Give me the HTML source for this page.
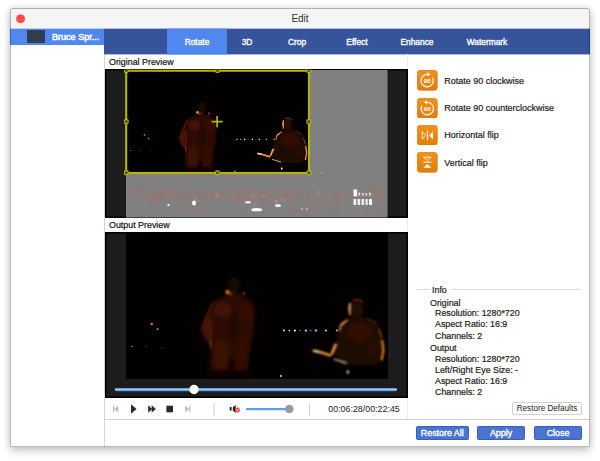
<!DOCTYPE html>
<html><head><meta charset="utf-8">
<style>
html,body{margin:0;padding:0;background:#fff;}
body{width:600px;height:461px;position:relative;overflow:hidden;font-family:"Liberation Sans",sans-serif;font-size:9px;color:#222;}
#win{position:absolute;left:10px;top:8px;width:580px;height:439px;background:#fff;border-radius:2.5px 2.5px 0 0;box-shadow:0 5px 9px rgba(0,0,0,.16),0 0 6px rgba(0,0,0,.16);overflow:hidden;}
#frameb{position:absolute;left:0;top:0;right:0;bottom:0;border:1px solid rgba(0,0,0,.27);border-radius:2.5px 2.5px 0 0;pointer-events:none;}
.abs{position:absolute;}
#title{left:0;top:0;width:580px;height:21px;background:#f5f5f5;text-align:center;line-height:21px;font-size:10px;color:#333;}
#dot{left:6.3px;top:6.5px;width:8.4px;height:8.4px;border-radius:50%;background:#fc4d47;box-shadow:inset 0 0 0 .5px #d93a34;}
#left{left:0;top:21px;width:94px;height:418px;background:#fff;border-right:1px solid #d4d4d4;}
#row{left:0;top:21px;width:94px;height:16px;background:#5287ef;color:#fff;font-weight:normal;-webkit-text-stroke:.5px #fff;font-size:9.05px;line-height:16px;white-space:nowrap;}
#thumb{left:17px;top:22px;width:18px;height:13px;background:#333d4d;}
#tabs{left:94px;top:21px;width:486px;height:25px;background:#35549c;}
.tab{position:absolute;top:0;height:25px;line-height:26.5px;color:#fff;font-weight:normal;-webkit-text-stroke:.35px #fff;font-size:8.4px;text-align:center;}
.lbl{-webkit-text-stroke:.2px #111;font-size:8.9px;color:#111;line-height:12px;}
.btn{position:absolute;height:12px;line-height:12px;background:#4a74cf;border:1px solid #3a5fb8;color:#fff;font-weight:normal;-webkit-text-stroke:.35px #fff;font-size:8.9px;text-align:center;border-radius:1.5px;}
.ico{position:absolute;left:407px;width:21px;height:21px;background:#e8860f;border-radius:2.5px;}
.itx{-webkit-text-stroke:.2px #222;position:absolute;left:434.3px;font-size:8.97px;color:#222;line-height:12px;}
.info{-webkit-text-stroke:.2px #222;position:absolute;font-size:8.85px;color:#222;line-height:11px;white-space:nowrap;}
</style></head><body>

<svg width="0" height="0" style="position:absolute">
<defs>
<filter id="b1" x="-20%" y="-20%" width="140%" height="140%"><feGaussianBlur stdDeviation="2.2"/></filter>
<filter id="b2" x="-20%" y="-20%" width="140%" height="140%"><feGaussianBlur stdDeviation="0.8"/></filter>
<filter id="b3" x="-20%" y="-20%" width="140%" height="140%"><feGaussianBlur stdDeviation="0.5"/></filter>
<clipPath id="hc"><rect x="-2" y="-0.3" width="190" height="110"/></clipPath>
<symbol id="frame" viewBox="0 0 261.5 147.5" preserveAspectRatio="none">
<rect width="261.5" height="147.5" fill="#020000"/>
<g transform="translate(0.5,0.5) scale(0.6993)">
 <!-- figure 1 -->
 <g filter="url(#b1)" opacity=".88">
  <path d="M103 62 L87 70 L79 86 L75 100 L79 108 L84 113 L84 130 L86 143 L121 143 L124 120 L128 100 L129 82 L128 71 L114 62 Z" fill="#330e04"/>
  <ellipse cx="108" cy="53" rx="6.5" ry="8" fill="#1a0703"/>
  <ellipse cx="97" cy="78" rx="9" ry="8" fill="#481407"/>
  <ellipse cx="120" cy="80" rx="7" ry="9" fill="#401105"/>
  <ellipse cx="82" cy="97" rx="5" ry="13" fill="#501708"/>
  <ellipse cx="108" cy="94" rx="4" ry="18" fill="#230902"/>
  <ellipse cx="95" cy="122" rx="8" ry="16" fill="#421206"/>
  <ellipse cx="116" cy="118" rx="6" ry="18" fill="#3a1005"/>
  <ellipse cx="105" cy="134" rx="3" ry="10" fill="#180501"/>
  <rect x="80" y="138" width="48" height="9" fill="#0a0301"/>
 </g>
 <g filter="url(#b2)">
  <path d="M87 70 L80 86 L76 99" stroke="#64200a" stroke-width="1.3" fill="none"/>
  <ellipse cx="101.5" cy="60" rx="1.9" ry="2.1" fill="#ff8e22"/>
  <ellipse cx="104" cy="61.5" rx="3" ry="1.1" fill="#a8480e"/>
  <ellipse cx="118" cy="61.5" rx="1.3" ry="1.7" fill="#8a3c0e"/>
  <path d="M84.5 108 L85 116" stroke="#a04418" stroke-width="1.1" fill="none"/>
 </g>
 <!-- figure 2 -->
 <g filter="url(#b1)">
  <path d="M223 86 L214 92 L210 108 L207 120 L212 127 L216 133 L250 133 L256 128 L257 108 L253 92 L238 85 Z" fill="#1f0802"/>
  <ellipse cx="231" cy="77" rx="6.5" ry="8" fill="#260b03"/>
  <ellipse cx="234" cy="100" rx="12" ry="9" fill="#361105"/>
  <ellipse cx="247" cy="116" rx="5" ry="10" fill="#2c0d04"/>
 </g>
 <g filter="url(#b2)">
  <path d="M224.5 71 Q222.5 76 224.5 83" stroke="#ff9c4c" stroke-width="1.7" fill="none"/>
  <path d="M224.3 73 L224 79" stroke="#ffe0b0" stroke-width=".9" fill="none"/>
  <path d="M227 68.5 Q233 66 237 70.5" stroke="#8a3c0e" stroke-width="1.3" fill="none"/>
  <path d="M222 87.5 L215 93 L213.5 99" stroke="#f08a30" stroke-width="1.5" fill="none"/>
  <path d="M219 89.5 L215.5 93" stroke="#ffd8a0" stroke-width="1" fill="none"/>
  <path d="M241 86.5 L251 91.5" stroke="#6a2c0a" stroke-width="1.1" fill="none"/>
  <path d="M253 97 L256 106" stroke="#b85a18" stroke-width="1.1" fill="none"/>
  <path d="M256.3 108 L257.6 118 L255.8 128" stroke="#ff8a20" stroke-width="2" fill="none"/>
  <path d="M210.5 112 L208 117 L205.5 123" stroke="#ff8a28" stroke-width="2.4" fill="none"/>
  <path d="M209 112 L206.5 120" stroke="#ffc070" stroke-width="1" fill="none"/>
  <path d="M187 118.5 L196 120.5 L205 123.5" stroke="#ff9a38" stroke-width="2.4" fill="none"/>
  <path d="M187.5 118.5 L194 120" stroke="#ffe8b0" stroke-width="1.5" fill="none"/>
  <path d="M208 127 L221 131" stroke="#d8c8b8" stroke-width="1.2" fill="none"/>
  <ellipse cx="222" cy="140" rx="1.1" ry="1.8" fill="#fff0e0"/>
 </g>
 <!-- lights -->
 <g filter="url(#b3)">
  <circle cx="158" cy="98.5" r="1" fill="#e0e0f0"/><circle cx="163.5" cy="98.5" r=".9" fill="#c8c8d8"/>
  <circle cx="169" cy="98.5" r="1.1" fill="#e8e8ff"/><circle cx="180" cy="98.5" r="1.1" fill="#d0d8ff"/>
  <circle cx="190" cy="98.5" r="1.2" fill="#8fb0ff"/><circle cx="200" cy="98.5" r="1" fill="#c8d0f0"/>
  <circle cx="211" cy="98.5" r="1" fill="#b0b8e0"/><circle cx="174" cy="98.5" r=".7" fill="#9090a0"/><circle cx="185" cy="98.5" r=".7" fill="#9090a0"/>
  <circle cx="25.7" cy="92" r="1.3" fill="#e86a30"/><circle cx="31.6" cy="97" r=".9" fill="#c0c0c0"/>
  <circle cx="6" cy="114.4" r=".8" fill="#a0a0a0"/><circle cx="155" cy="144" r="1" fill="#d8d8d8"/>
  <circle cx="20" cy="114" r=".6" fill="#707070"/><circle cx="36" cy="116" r=".6" fill="#606060"/>
 </g>
</g>
</symbol>
</defs></svg>
<div id="win">
  <div id="title" class="abs">Edit</div>
  <svg class="abs" style="left:5px;top:5px;" width="12" height="12" viewBox="0 0 12 12"><circle cx="5.6" cy="5.8" r="4.1" fill="#fc4e48" stroke="#de3d37" stroke-width=".5"/></svg>
  <div id="left" class="abs"></div>
  <div id="row" class="abs"><span style="position:absolute;left:42px;">Bruce Spr...</span></div>
  <div id="thumb" class="abs"></div>
  <div id="tabs" class="abs">
    <div class="tab" style="left:63px;width:60px;background:#5287ef;">Rotate</div>
    <div class="tab" style="left:123px;width:40px;">3D</div>
    <div class="tab" style="left:163px;width:60px;">Crop</div>
    <div class="tab" style="left:223px;width:60px;">Effect</div>
    <div class="tab" style="left:283px;width:60px;">Enhance</div>
    <div class="tab" style="left:343px;width:80px;">Watermark</div>
  </div>
  <div class="abs" style="left:94px;top:20px;width:486px;height:1px;background:#35549c;opacity:.35;"></div>
  <div class="abs" style="left:0;top:20px;width:94px;height:1px;background:#5287ef;opacity:.35;"></div>
  <div class="abs" style="left:157px;top:20px;width:60px;height:1px;background:#5287ef;opacity:.35;"></div>
  <div class="abs" style="left:94px;top:46px;width:486px;height:1px;background:#35549c;opacity:.4;"></div>
  <div class="abs" style="left:157px;top:46px;width:60px;height:1px;background:#5287ef;opacity:.5;"></div>
  <div class="abs lbl" style="left:99px;top:48px;">Original Preview</div>
  <div class="abs" style="left:397px;top:46px;width:1px;height:365px;background:#ececec;"></div>
  <!-- original preview -->
  <div class="abs" style="left:95px;top:61px;width:303px;height:148.5px;background:#1d1d1d;box-shadow:inset 0 0 0 1.5px #000;"></div>
  <svg class="abs" style="left:116px;top:61.5px;overflow:visible;" width="261.5" height="147.5" viewBox="0 0 261.5 147.5">
    <use href="#frame" width="261.5" height="147.5"/>
    <path d="M0 0H261.5V147.5H0Z M0.5 0.5V102.8H183.3V0.5Z" fill="#fff" fill-opacity=".5" fill-rule="evenodd"/>
<g filter="url(#b2)">
<ellipse cx="121.5" cy="119.2" rx="1.9" ry="1.0" fill="#b86a58" opacity="0.54"/>
<ellipse cx="209.8" cy="123.3" rx="1.9" ry="1.1" fill="#96706a" opacity="0.50"/>
<ellipse cx="84.2" cy="130.9" rx="2.5" ry="0.5" fill="#8e7672" opacity="0.93"/>
<ellipse cx="172.1" cy="129.1" rx="2.3" ry="0.6" fill="#a0685e" opacity="0.87"/>
<ellipse cx="23.9" cy="132.4" rx="2.2" ry="1.2" fill="#ad6557" opacity="0.67"/>
<ellipse cx="219.4" cy="127.5" rx="2.0" ry="1.1" fill="#8e7672" opacity="0.45"/>
<ellipse cx="29.3" cy="124.2" rx="2.1" ry="1.3" fill="#a0685e" opacity="0.80"/>
<ellipse cx="87.1" cy="123.3" rx="1.4" ry="0.8" fill="#a0685e" opacity="0.73"/>
<ellipse cx="35.1" cy="128.1" rx="1.0" ry="0.5" fill="#9a6c64" opacity="0.45"/>
<ellipse cx="60.6" cy="127.7" rx="3.0" ry="0.9" fill="#9a6c64" opacity="0.65"/>
<ellipse cx="26.3" cy="122.2" rx="1.4" ry="0.6" fill="#ad6557" opacity="0.46"/>
<ellipse cx="110.9" cy="122.0" rx="3.0" ry="0.6" fill="#9a6c64" opacity="0.50"/>
<ellipse cx="23.0" cy="126.6" rx="2.1" ry="0.9" fill="#96706a" opacity="0.94"/>
<ellipse cx="201.2" cy="124.1" rx="1.8" ry="0.8" fill="#8e7672" opacity="0.66"/>
<ellipse cx="61.4" cy="124.9" rx="2.7" ry="0.8" fill="#a0685e" opacity="0.56"/>
<ellipse cx="222.4" cy="125.1" rx="3.2" ry="0.7" fill="#ad6557" opacity="0.45"/>
<ellipse cx="161.2" cy="124.9" rx="2.8" ry="0.8" fill="#a0685e" opacity="0.50"/>
<ellipse cx="154.3" cy="126.2" rx="1.7" ry="0.9" fill="#b86a58" opacity="0.69"/>
<ellipse cx="152.2" cy="130.3" rx="2.9" ry="0.7" fill="#96706a" opacity="0.61"/>
<ellipse cx="65.3" cy="122.0" rx="1.2" ry="1.1" fill="#b86a58" opacity="0.55"/>
<ellipse cx="246.5" cy="121.3" rx="2.9" ry="1.0" fill="#8e7672" opacity="0.47"/>
<ellipse cx="35.4" cy="123.6" rx="2.6" ry="0.9" fill="#8e7672" opacity="0.86"/>
<ellipse cx="157.7" cy="125.8" rx="1.5" ry="0.7" fill="#9a6c64" opacity="0.94"/>
<ellipse cx="39.7" cy="121.4" rx="2.3" ry="0.6" fill="#96706a" opacity="0.91"/>
<ellipse cx="59.2" cy="126.6" rx="0.8" ry="0.7" fill="#8e7672" opacity="0.57"/>
<ellipse cx="19.7" cy="125.2" rx="3.1" ry="0.6" fill="#96706a" opacity="0.90"/>
<ellipse cx="254.1" cy="127.6" rx="2.4" ry="1.1" fill="#b86a58" opacity="0.92"/>
<ellipse cx="156.1" cy="129.2" rx="1.7" ry="0.8" fill="#a0685e" opacity="0.46"/>
<ellipse cx="167.7" cy="124.3" rx="2.0" ry="1.2" fill="#ad6557" opacity="0.52"/>
<ellipse cx="26.2" cy="123.1" rx="0.9" ry="1.3" fill="#9a6c64" opacity="0.80"/>
<ellipse cx="207.1" cy="126.9" rx="3.0" ry="0.8" fill="#9a6c64" opacity="0.69"/>
<ellipse cx="27.5" cy="130.8" rx="0.9" ry="0.9" fill="#a0685e" opacity="0.76"/>
<ellipse cx="104.0" cy="120.0" rx="2.2" ry="1.0" fill="#a0685e" opacity="0.50"/>
<ellipse cx="37.0" cy="125.8" rx="1.6" ry="1.3" fill="#9a6c64" opacity="0.74"/>
<ellipse cx="118.6" cy="129.3" rx="2.8" ry="0.6" fill="#c27462" opacity="0.71"/>
<ellipse cx="85.9" cy="126.6" rx="3.1" ry="0.6" fill="#c27462" opacity="0.76"/>
<ellipse cx="239.0" cy="125.9" rx="1.4" ry="0.5" fill="#ad6557" opacity="0.52"/>
<ellipse cx="161.6" cy="120.7" rx="1.6" ry="1.3" fill="#8e7672" opacity="0.90"/>
<ellipse cx="90.1" cy="125.4" rx="2.4" ry="0.7" fill="#8e7672" opacity="0.85"/>
<ellipse cx="197.4" cy="126.7" rx="1.3" ry="1.3" fill="#96706a" opacity="0.52"/>
<ellipse cx="132.6" cy="128.1" rx="2.8" ry="1.3" fill="#9a6c64" opacity="0.48"/>
<ellipse cx="254.1" cy="124.4" rx="1.9" ry="1.3" fill="#c27462" opacity="0.66"/>
<ellipse cx="165.1" cy="124.6" rx="2.0" ry="0.8" fill="#c27462" opacity="0.87"/>
<ellipse cx="164.8" cy="123.4" rx="1.5" ry="1.0" fill="#9a6c64" opacity="0.80"/>
<ellipse cx="151.2" cy="131.4" rx="1.5" ry="1.2" fill="#a0685e" opacity="0.77"/>
<ellipse cx="109.7" cy="128.0" rx="1.4" ry="1.2" fill="#c27462" opacity="0.47"/>
<ellipse cx="165.9" cy="131.1" rx="1.9" ry="1.1" fill="#9a6c64" opacity="0.77"/>
<ellipse cx="100.5" cy="127.9" rx="2.8" ry="0.7" fill="#9a6c64" opacity="0.46"/>
<ellipse cx="126.5" cy="127.0" rx="2.5" ry="0.7" fill="#ad6557" opacity="0.84"/>
<ellipse cx="143.5" cy="129.6" rx="3.2" ry="0.6" fill="#c27462" opacity="0.85"/>
<ellipse cx="235.5" cy="124.7" rx="1.0" ry="1.3" fill="#9a6c64" opacity="0.64"/>
<ellipse cx="121.1" cy="128.2" rx="0.8" ry="1.0" fill="#9a6c64" opacity="0.89"/>
<ellipse cx="208.0" cy="132.3" rx="3.1" ry="0.9" fill="#9a6c64" opacity="0.94"/>
<ellipse cx="32.8" cy="129.8" rx="3.0" ry="0.6" fill="#96706a" opacity="0.90"/>
<ellipse cx="254.1" cy="119.4" rx="3.1" ry="1.0" fill="#c27462" opacity="0.92"/>
<ellipse cx="73.7" cy="125.9" rx="2.0" ry="0.5" fill="#ad6557" opacity="0.73"/>
<ellipse cx="200.8" cy="125.4" rx="2.0" ry="0.5" fill="#c27462" opacity="0.88"/>
<ellipse cx="115.7" cy="129.9" rx="2.4" ry="1.3" fill="#8e7672" opacity="0.52"/>
<ellipse cx="137.6" cy="126.9" rx="2.5" ry="1.3" fill="#9a6c64" opacity="0.67"/>
<ellipse cx="228.9" cy="121.7" rx="2.6" ry="0.9" fill="#b86a58" opacity="0.60"/>
<ellipse cx="190.9" cy="123.7" rx="2.3" ry="1.0" fill="#c27462" opacity="0.90"/>
<ellipse cx="72.4" cy="122.2" rx="2.9" ry="1.0" fill="#ad6557" opacity="0.88"/>
<ellipse cx="251.1" cy="117.1" rx="2.1" ry="1.0" fill="#96706a" opacity="0.66"/>
<ellipse cx="36.7" cy="129.1" rx="2.1" ry="0.5" fill="#8e7672" opacity="0.72"/>
<ellipse cx="256.3" cy="123.5" rx="1.1" ry="0.6" fill="#96706a" opacity="0.48"/>
<ellipse cx="143.2" cy="119.1" rx="3.0" ry="0.7" fill="#8e7672" opacity="0.70"/>
<ellipse cx="93.3" cy="130.1" rx="3.0" ry="1.3" fill="#8e7672" opacity="0.71"/>
<ellipse cx="35.3" cy="125.3" rx="1.4" ry="1.1" fill="#a0685e" opacity="0.47"/>
<ellipse cx="47.0" cy="126.4" rx="0.8" ry="0.8" fill="#9a6c64" opacity="0.63"/>
<ellipse cx="163.6" cy="130.1" rx="1.1" ry="1.0" fill="#ad6557" opacity="0.81"/>
<ellipse cx="184.0" cy="129.2" rx="2.9" ry="0.5" fill="#9a6c64" opacity="0.66"/>
<ellipse cx="140.9" cy="127.2" rx="2.3" ry="1.1" fill="#b86a58" opacity="0.56"/>
<ellipse cx="144.3" cy="127.8" rx="2.2" ry="0.6" fill="#9a6c64" opacity="0.76"/>
<ellipse cx="95.2" cy="127.8" rx="2.9" ry="0.7" fill="#c27462" opacity="0.95"/>
<ellipse cx="230.8" cy="129.9" rx="1.1" ry="0.7" fill="#9a6c64" opacity="0.49"/>
<ellipse cx="105.4" cy="119.0" rx="2.1" ry="1.1" fill="#96706a" opacity="0.65"/>
<ellipse cx="180.0" cy="129.0" rx="0.8" ry="0.7" fill="#9a6c64" opacity="0.63"/>
<ellipse cx="214.1" cy="122.8" rx="2.3" ry="0.8" fill="#9a6c64" opacity="0.87"/>
<ellipse cx="209.5" cy="129.8" rx="2.0" ry="0.5" fill="#c27462" opacity="0.73"/>
<ellipse cx="137.2" cy="124.4" rx="1.2" ry="0.7" fill="#c27462" opacity="0.53"/>
<ellipse cx="79.1" cy="125.2" rx="2.4" ry="1.0" fill="#96706a" opacity="0.93"/>
<ellipse cx="124.0" cy="126.3" rx="1.9" ry="1.0" fill="#8e7672" opacity="0.56"/>
<ellipse cx="101.7" cy="123.2" rx="2.3" ry="0.5" fill="#96706a" opacity="0.54"/>
<ellipse cx="121.9" cy="125.8" rx="1.3" ry="0.6" fill="#b86a58" opacity="0.85"/>
<ellipse cx="89.2" cy="122.7" rx="1.0" ry="1.3" fill="#c27462" opacity="0.90"/>
<ellipse cx="243.8" cy="123.1" rx="2.2" ry="0.8" fill="#c27462" opacity="0.58"/>
<ellipse cx="236.7" cy="124.9" rx="2.6" ry="1.2" fill="#c27462" opacity="0.92"/>
<ellipse cx="41.4" cy="124.1" rx="1.7" ry="0.9" fill="#96706a" opacity="0.65"/>
<ellipse cx="189.4" cy="129.5" rx="1.0" ry="0.8" fill="#8e7672" opacity="0.50"/>
<ellipse cx="230.9" cy="132.9" rx="0.9" ry="0.7" fill="#9a6c64" opacity="0.60"/>
<ellipse cx="62.2" cy="125.6" rx="1.8" ry="0.7" fill="#a0685e" opacity="0.64"/>
<ellipse cx="259.0" cy="120.0" rx="2.6" ry="1.4" fill="#a0685e" opacity="0.51"/>
<ellipse cx="35.1" cy="122.1" rx="1.4" ry="0.9" fill="#b86a58" opacity="0.48"/>
<ellipse cx="57.1" cy="125.0" rx="1.4" ry="1.3" fill="#b86a58" opacity="0.72"/>
<ellipse cx="112.3" cy="127.0" rx="2.0" ry="1.3" fill="#a0685e" opacity="0.77"/>
<ellipse cx="211.2" cy="129.8" rx="2.6" ry="0.5" fill="#96706a" opacity="0.64"/>
<ellipse cx="251.5" cy="126.0" rx="2.9" ry="1.0" fill="#b86a58" opacity="0.48"/>
<ellipse cx="245.3" cy="121.3" rx="2.2" ry="0.8" fill="#ad6557" opacity="0.69"/>
<ellipse cx="75.7" cy="127.9" rx="3.0" ry="1.1" fill="#9a6c64" opacity="0.60"/>
<ellipse cx="11.5" cy="126.0" rx="1.2" ry="1.2" fill="#8e7672" opacity="0.48"/>
<ellipse cx="87.1" cy="126.9" rx="1.8" ry="1.0" fill="#9a6c64" opacity="0.92"/>
<ellipse cx="26.4" cy="128.8" rx="1.9" ry="1.4" fill="#96706a" opacity="0.47"/>
<ellipse cx="32.7" cy="124.1" rx="2.7" ry="1.3" fill="#96706a" opacity="0.94"/>
<ellipse cx="213.0" cy="124.7" rx="2.3" ry="0.9" fill="#96706a" opacity="0.88"/>
<ellipse cx="97.5" cy="125.0" rx="1.2" ry="0.8" fill="#96706a" opacity="0.78"/>
<ellipse cx="122.3" cy="125.7" rx="1.8" ry="1.2" fill="#b86a58" opacity="0.86"/>
<ellipse cx="42.4" cy="130.2" rx="1.5" ry="0.6" fill="#8e7672" opacity="0.51"/>
<ellipse cx="232.1" cy="127.0" rx="1.7" ry="0.7" fill="#9a6c64" opacity="0.81"/>
<ellipse cx="183.5" cy="121.6" rx="1.3" ry="0.8" fill="#96706a" opacity="0.54"/>
<ellipse cx="70.5" cy="133.1" rx="2.9" ry="0.5" fill="#a0685e" opacity="0.45"/>
<ellipse cx="73.1" cy="125.1" rx="0.9" ry="0.5" fill="#96706a" opacity="0.72"/>
<ellipse cx="26.2" cy="130.1" rx="2.1" ry="1.1" fill="#ad6557" opacity="0.69"/>
<ellipse cx="96.9" cy="128.5" rx="1.6" ry="0.9" fill="#96706a" opacity="0.87"/>
<ellipse cx="26.7" cy="130.3" rx="2.3" ry="1.2" fill="#96706a" opacity="0.67"/>
<ellipse cx="195.6" cy="130.0" rx="1.7" ry="0.6" fill="#96706a" opacity="0.78"/>
<ellipse cx="256.3" cy="121.6" rx="2.6" ry="1.3" fill="#8e7672" opacity="0.78"/>
<ellipse cx="153.7" cy="129.6" rx="1.9" ry="0.8" fill="#b86a58" opacity="0.49"/>
<ellipse cx="149.6" cy="121.2" rx="1.5" ry="1.2" fill="#a0685e" opacity="0.61"/>
<ellipse cx="236.6" cy="126.3" rx="2.2" ry="1.1" fill="#8e7672" opacity="0.81"/>
<ellipse cx="182.2" cy="125.6" rx="1.7" ry="1.2" fill="#ad6557" opacity="0.90"/>
<ellipse cx="88.9" cy="127.7" rx="1.9" ry="1.0" fill="#9a6c64" opacity="0.91"/>
<ellipse cx="117.9" cy="126.9" rx="1.6" ry="0.9" fill="#9a6c64" opacity="0.90"/>
<ellipse cx="70.3" cy="123.4" rx="1.7" ry="0.8" fill="#ad6557" opacity="0.79"/>
<ellipse cx="154.8" cy="127.5" rx="1.7" ry="0.9" fill="#96706a" opacity="0.87"/>
<ellipse cx="149.3" cy="121.0" rx="1.2" ry="1.2" fill="#c27462" opacity="0.59"/>
<ellipse cx="13.6" cy="122.0" rx="2.2" ry="1.4" fill="#9a6c64" opacity="0.87"/>
<ellipse cx="114.1" cy="125.6" rx="2.2" ry="0.8" fill="#b86a58" opacity="0.49"/>
<ellipse cx="28.5" cy="125.4" rx="1.0" ry="1.1" fill="#96706a" opacity="0.50"/>
<ellipse cx="212.9" cy="119.2" rx="1.8" ry="1.1" fill="#8e7672" opacity="0.83"/>
<ellipse cx="138.9" cy="126.3" rx="1.6" ry="1.4" fill="#9a6c64" opacity="0.52"/>
<ellipse cx="130.5" cy="122.8" rx="2.7" ry="0.6" fill="#b86a58" opacity="0.91"/>
<ellipse cx="111.1" cy="128.2" rx="2.8" ry="1.2" fill="#c27462" opacity="0.49"/>
<ellipse cx="124.6" cy="121.8" rx="2.1" ry="0.5" fill="#ad6557" opacity="0.81"/>
<ellipse cx="209.4" cy="123.1" rx="1.2" ry="1.2" fill="#9a6c64" opacity="0.64"/>
<ellipse cx="50.1" cy="127.6" rx="1.3" ry="0.9" fill="#ad6557" opacity="0.59"/>
<ellipse cx="230.4" cy="120.9" rx="1.5" ry="0.6" fill="#96706a" opacity="0.91"/>
<ellipse cx="197.0" cy="126.9" rx="0.8" ry="0.9" fill="#c27462" opacity="0.47"/>
<ellipse cx="35.3" cy="126.9" rx="1.4" ry="1.1" fill="#b86a58" opacity="0.70"/>
<ellipse cx="118.9" cy="128.1" rx="2.9" ry="0.9" fill="#c27462" opacity="0.92"/>
<ellipse cx="165.3" cy="129.8" rx="2.8" ry="0.9" fill="#8e7672" opacity="0.91"/>
<ellipse cx="93.9" cy="124.6" rx="2.1" ry="1.4" fill="#8e7672" opacity="0.88"/>
<ellipse cx="108.3" cy="126.3" rx="2.7" ry="1.4" fill="#c27462" opacity="0.71"/>
<ellipse cx="76.9" cy="127.7" rx="3.2" ry="1.1" fill="#96706a" opacity="0.90"/>
<ellipse cx="227.4" cy="128.9" rx="1.4" ry="0.9" fill="#c27462" opacity="0.53"/>
<ellipse cx="47.4" cy="124.0" rx="1.6" ry="0.7" fill="#c27462" opacity="0.86"/>
<ellipse cx="40.9" cy="125.8" rx="2.0" ry="0.5" fill="#b86a58" opacity="0.84"/>
<ellipse cx="8.3" cy="121.6" rx="2.8" ry="1.3" fill="#c27462" opacity="0.51"/>
<ellipse cx="96.3" cy="123.1" rx="2.9" ry="1.1" fill="#a0685e" opacity="0.93"/>
<ellipse cx="155.2" cy="123.4" rx="2.9" ry="0.8" fill="#c27462" opacity="0.54"/>
<ellipse cx="56.5" cy="123.7" rx="1.9" ry="0.5" fill="#8e7672" opacity="0.71"/>
<ellipse cx="47.5" cy="120.9" rx="2.8" ry="0.8" fill="#ad6557" opacity="0.65"/>
<ellipse cx="147.7" cy="130.7" rx="1.0" ry="0.6" fill="#96706a" opacity="0.50"/>
<ellipse cx="107.0" cy="125.9" rx="1.9" ry="1.4" fill="#c27462" opacity="0.51"/>
<ellipse cx="119.8" cy="129.3" rx="1.9" ry="0.8" fill="#a0685e" opacity="0.68"/>
<ellipse cx="10.6" cy="122.2" rx="3.2" ry="1.2" fill="#96706a" opacity="0.90"/>
<ellipse cx="46.2" cy="120.8" rx="2.6" ry="1.4" fill="#c27462" opacity="0.65"/>
<ellipse cx="175.3" cy="120.6" rx="1.4" ry="0.7" fill="#9a6c64" opacity="0.50"/>
<ellipse cx="85.7" cy="125.5" rx="2.3" ry="0.9" fill="#8e7672" opacity="0.50"/>
<ellipse cx="43.3" cy="129.6" rx="1.0" ry="1.1" fill="#9a6c64" opacity="0.54"/>
<ellipse cx="56.5" cy="129.5" rx="2.5" ry="0.6" fill="#a0685e" opacity="0.53"/>
<ellipse cx="39.2" cy="126.8" rx="1.8" ry="0.6" fill="#c27462" opacity="0.66"/>
<ellipse cx="136.4" cy="122.7" rx="2.8" ry="0.8" fill="#ad6557" opacity="0.91"/>
<ellipse cx="164.4" cy="121.6" rx="2.5" ry="1.1" fill="#ad6557" opacity="0.94"/>
<ellipse cx="206.2" cy="123.7" rx="0.8" ry="0.8" fill="#ad6557" opacity="0.60"/>
<ellipse cx="118.7" cy="122.3" rx="2.1" ry="0.7" fill="#ad6557" opacity="0.84"/>
<ellipse cx="215.1" cy="124.6" rx="2.6" ry="1.3" fill="#b86a58" opacity="0.57"/>
<ellipse cx="161.6" cy="124.8" rx="2.0" ry="1.0" fill="#96706a" opacity="0.94"/>
<ellipse cx="137.5" cy="124.7" rx="1.3" ry="1.4" fill="#9a6c64" opacity="0.78"/>
<ellipse cx="202.9" cy="120.1" rx="1.1" ry="0.9" fill="#8e7672" opacity="0.80"/>
<ellipse cx="105.4" cy="145.1" rx="2.8" ry="0.7" fill="#9a6c64" opacity="0.58"/>
<ellipse cx="197.1" cy="136.9" rx="3.5" ry="0.7" fill="#9a6c64" opacity="0.62"/>
<ellipse cx="90.5" cy="144.9" rx="5.0" ry="0.9" fill="#8c7470" opacity="0.46"/>
<ellipse cx="243.9" cy="134.0" rx="3.9" ry="0.6" fill="#8c7470" opacity="0.55"/>
<ellipse cx="68.0" cy="141.2" rx="4.3" ry="0.7" fill="#a8645a" opacity="0.47"/>
<ellipse cx="256.0" cy="145.3" rx="3.8" ry="0.6" fill="#8c7470" opacity="0.74"/>
<ellipse cx="237.6" cy="141.4" rx="3.7" ry="0.9" fill="#9a6c64" opacity="0.48"/>
<ellipse cx="137.2" cy="135.7" rx="2.9" ry="0.7" fill="#9a6c64" opacity="0.53"/>
<ellipse cx="60.1" cy="136.9" rx="4.8" ry="0.4" fill="#9a6c64" opacity="0.69"/>
<ellipse cx="210.3" cy="138.8" rx="3.2" ry="0.5" fill="#a8645a" opacity="0.56"/>
<ellipse cx="172.9" cy="142.3" rx="4.2" ry="0.9" fill="#a8645a" opacity="0.76"/>
<ellipse cx="136.1" cy="144.9" rx="3.9" ry="0.9" fill="#9a6c64" opacity="0.63"/>
<ellipse cx="237.3" cy="140.3" rx="3.3" ry="0.7" fill="#9a6c64" opacity="0.53"/>
<ellipse cx="42.5" cy="142.7" rx="4.7" ry="0.8" fill="#8c7470" opacity="0.53"/>
<ellipse cx="210.8" cy="144.6" rx="4.6" ry="0.5" fill="#a8645a" opacity="0.50"/>
<ellipse cx="229.9" cy="145.7" rx="3.2" ry="0.5" fill="#9a6c64" opacity="0.62"/>
<ellipse cx="180.4" cy="145.3" rx="4.6" ry="1.0" fill="#8c7470" opacity="0.79"/>
<ellipse cx="182.4" cy="144.4" rx="3.0" ry="0.9" fill="#9a6c64" opacity="0.66"/>
<ellipse cx="126.5" cy="135.5" rx="1.8" ry="0.7" fill="#9a6c64" opacity="0.45"/>
<ellipse cx="153.1" cy="145.4" rx="1.5" ry="0.5" fill="#a8645a" opacity="0.41"/>
<ellipse cx="69.4" cy="139.3" rx="3.1" ry="0.7" fill="#9a6c64" opacity="0.54"/>
<ellipse cx="164.1" cy="134.6" rx="1.6" ry="0.9" fill="#a8645a" opacity="0.53"/>
<ellipse cx="62.8" cy="143.3" rx="4.2" ry="0.9" fill="#9a6c64" opacity="0.52"/>
<ellipse cx="241.3" cy="144.8" rx="2.2" ry="0.9" fill="#a8645a" opacity="0.76"/>
<ellipse cx="33.7" cy="141.6" rx="3.9" ry="0.7" fill="#8c7470" opacity="0.65"/>
<ellipse cx="73.9" cy="144.6" rx="1.7" ry="0.5" fill="#8c7470" opacity="0.73"/>
<ellipse cx="250.2" cy="137.3" rx="3.0" ry="0.9" fill="#a8645a" opacity="0.68"/>
<ellipse cx="244.8" cy="139.3" rx="1.8" ry="0.5" fill="#a8645a" opacity="0.45"/>
<ellipse cx="188.3" cy="137.2" rx="4.0" ry="0.7" fill="#a8645a" opacity="0.72"/>
<ellipse cx="115.3" cy="141.9" rx="4.6" ry="0.8" fill="#9a6c64" opacity="0.79"/>
<ellipse cx="235.1" cy="136.2" rx="2.3" ry="0.5" fill="#8c7470" opacity="0.44"/>
<ellipse cx="255.1" cy="139.3" rx="3.3" ry="0.7" fill="#9a6c64" opacity="0.40"/>
<ellipse cx="164.3" cy="140.4" rx="3.0" ry="0.7" fill="#9a6c64" opacity="0.51"/>
<ellipse cx="203.1" cy="137.0" rx="2.5" ry="0.7" fill="#9a6c64" opacity="0.72"/>
<ellipse cx="64.5" cy="144.8" rx="3.7" ry="0.9" fill="#8c7470" opacity="0.55"/>
<ellipse cx="242.8" cy="140.0" rx="2.1" ry="0.7" fill="#8c7470" opacity="0.76"/>
<ellipse cx="103.5" cy="139.8" rx="1.6" ry="0.6" fill="#8c7470" opacity="0.67"/>
<ellipse cx="149.2" cy="145.4" rx="2.1" ry="0.9" fill="#9a6c64" opacity="0.44"/>
<ellipse cx="129.7" cy="142.0" rx="3.4" ry="0.6" fill="#8c7470" opacity="0.72"/>
<ellipse cx="84.0" cy="139.9" rx="2.3" ry="0.7" fill="#a8645a" opacity="0.50"/>
<ellipse cx="76.4" cy="145.6" rx="1.7" ry="0.7" fill="#9a6c64" opacity="0.53"/>
<ellipse cx="169.3" cy="141.3" rx="4.3" ry="0.7" fill="#8c7470" opacity="0.51"/>
<ellipse cx="212.9" cy="134.9" rx="4.7" ry="0.7" fill="#8c7470" opacity="0.63"/>
<ellipse cx="195.4" cy="141.5" rx="1.7" ry="0.7" fill="#8c7470" opacity="0.53"/>
<ellipse cx="172.3" cy="140.3" rx="2.4" ry="0.8" fill="#9a6c64" opacity="0.66"/>
<ellipse cx="137.4" cy="126.4" rx="1.0" ry="0.7" fill="#e8c0b4" opacity=".8"/>
<ellipse cx="157.1" cy="129.6" rx="1.0" ry="0.5" fill="#e8c0b4" opacity=".8"/>
<ellipse cx="127.4" cy="126.5" rx="1.4" ry="0.5" fill="#e8c0b4" opacity=".8"/>
<ellipse cx="193.7" cy="123.6" rx="1.1" ry="0.5" fill="#e8c0b4" opacity=".8"/>
<ellipse cx="191.3" cy="119.3" rx="0.6" ry="0.6" fill="#e8c0b4" opacity=".8"/>
<ellipse cx="140.9" cy="126.8" rx="0.7" ry="0.6" fill="#e8c0b4" opacity=".8"/>
<ellipse cx="128.5" cy="135.4" rx="1.1" ry="0.7" fill="#e8c0b4" opacity=".8"/>
<ellipse cx="244.5" cy="124.8" rx="1.1" ry="0.5" fill="#e8c0b4" opacity=".8"/>
<ellipse cx="47.3" cy="129.9" rx="0.7" ry="0.5" fill="#e8c0b4" opacity=".8"/>
<ellipse cx="91.0" cy="125.5" rx="1.4" ry="0.8" fill="#e8c0b4" opacity=".8"/>
<ellipse cx="70.2" cy="130.1" rx="1.4" ry="0.7" fill="#e8c0b4" opacity=".8"/>
<ellipse cx="150.5" cy="131.4" rx="1.3" ry="0.8" fill="#e8c0b4" opacity=".8"/>
<ellipse cx="232.5" cy="130.6" rx="1.3" ry="0.5" fill="#e8c0b4" opacity=".8"/>
<ellipse cx="107.1" cy="133.3" rx="0.6" ry="0.6" fill="#e8c0b4" opacity=".8"/>
</g><g filter="url(#b3)">
 <ellipse cx="68" cy="133" rx="2" ry="2.5" fill="#fff"/>
 <ellipse cx="42.5" cy="135" rx="1.2" ry=".9" fill="#fff"/>
 <ellipse cx="122" cy="132.3" rx="3.2" ry="1.1" fill="#fff"/>
 <ellipse cx="130.7" cy="139.7" rx="5.5" ry="1.6" fill="#fff"/>
 <ellipse cx="152" cy="135.7" rx="3" ry="1.4" fill="#fff"/>
 <circle cx="176" cy="139" r=".8" fill="#eee"/><circle cx="181" cy="139" r=".8" fill="#eee"/>
 <circle cx="196" cy="103" r=".7" fill="#b8b8b8"/><circle cx="210" cy="92" r=".6" fill="#b0b0b0"/><circle cx="222" cy="90" r=".6" fill="#b0b0b0"/><circle cx="187" cy="115" r=".5" fill="#a0a0a0"/>
 <rect x="227.5" y="119.5" width="3.6" height="6.8" fill="#fff"/>
 <rect x="232.5" y="122.5" width="1.6" height="3" fill="#e8e8e8"/><rect x="236" y="123" width="1.6" height="2.6" fill="#ddd"/><rect x="239.5" y="123" width="1.6" height="2.6" fill="#ddd"/><rect x="243" y="122.5" width="1.6" height="3" fill="#ddd"/>
 <rect x="227.5" y="129" width="2.6" height="6" fill="#f4f4f4"/><rect x="231.5" y="129" width="2.6" height="6" fill="#eee"/><rect x="235.5" y="129" width="2.6" height="6" fill="#eee"/><rect x="239.5" y="129" width="2.2" height="6" fill="#eee"/><rect x="243" y="129" width="3" height="6" fill="#f4f4f4"/>
</g>
    <g stroke="#b4b408" fill="none" stroke-width="2.1">
      <rect x="0.2" y="0.75" width="182.8" height="102.25"/>
      <g stroke-width="1.2" fill="#4a4a00" clip-path="url(#hc)"><rect x="-1.6" y="-1.4" width="3.8" height="3.8" rx="1.2"/><rect x="89.6" y="-1.4" width="3.8" height="3.8" rx="1.2"/><rect x="180.9" y="-1.4" width="3.8" height="3.8" rx="1.2"/><rect x="-1.6" y="49.7" width="3.8" height="3.8" rx="1.2"/><rect x="180.9" y="49.7" width="3.8" height="3.8" rx="1.2"/><rect x="-1.6" y="100.9" width="3.8" height="3.8" rx="1.2"/><rect x="89.6" y="100.9" width="3.8" height="3.8" rx="1.2"/><rect x="180.9" y="100.9" width="3.8" height="3.8" rx="1.2"/></g>
      <path d="M85.5 51.6H96.7M91.1 46V57.2" stroke-width="1.7"/>
    </g>
  </svg>
  <div class="abs lbl" style="left:99px;top:211px;">Output Preview</div>
  <!-- output preview -->
  <div class="abs" style="left:95px;top:224px;width:303px;height:166px;background:#1c1c1c;box-shadow:inset 0 0 0 1.5px #000;"></div>
  <svg class="abs" style="left:116px;top:224px;" width="261.5" height="146.5" viewBox="0.5 0.5 183 102.4" preserveAspectRatio="none"><use href="#frame" width="261.5" height="147.5"/></svg>
  <svg class="abs" style="left:100px;top:374px;" width="295" height="16" viewBox="110 382 295 16"><rect x="114.6" y="387.9" width="282.6" height="3.3" rx="1.6" fill="#4f86d6"/><rect x="114.9" y="388.5" width="282" height="2.1" rx="1" fill="#88c6ff"/><circle cx="194" cy="389.5" r="4.7" fill="#fdfdfd"/></svg>
  <!-- separators -->
  <div class="abs" style="left:95px;top:411px;width:485px;height:1px;background:#d0d0d0;"></div>
  <!-- right icons -->
  <svg class="abs" style="left:407.3px;top:62.3px;" width="20.6" height="20.6" viewBox="0 0 20.6 20.6"><defs><linearGradient id="og" x1="0" y1="0" x2="0" y2="1"><stop offset="0" stop-color="#f0921a"/><stop offset="1" stop-color="#e27f08"/></linearGradient></defs><rect x=".4" y=".4" width="19.8" height="19.8" rx="2.6" fill="url(#og)" stroke="#d87a0c" stroke-width=".8"/><g fill="none" stroke="#fff" stroke-width="1.2" stroke-linecap="round"><path d="M15.8 8.2A6.2 6.2 0 1 1 10.9 4.5"/></g><path d="M10.5 2.3L13.5 4.3L10.5 6.3Z" fill="#fff"/><text x="10.2" y="12.9" font-family="Liberation Sans, sans-serif" font-size="6.2" font-weight="bold" fill="#fff" text-anchor="middle">90</text></svg><div class="itx" style="top:66.89999999999999px;">Rotate 90 clockwise</div>
  <svg class="abs" style="left:407.3px;top:89.5px;" width="20.6" height="20.6" viewBox="0 0 20.6 20.6"><defs><linearGradient id="og" x1="0" y1="0" x2="0" y2="1"><stop offset="0" stop-color="#f0921a"/><stop offset="1" stop-color="#e27f08"/></linearGradient></defs><rect x=".4" y=".4" width="19.8" height="19.8" rx="2.6" fill="url(#og)" stroke="#d87a0c" stroke-width=".8"/><g fill="none" stroke="#fff" stroke-width="1.2" stroke-linecap="round"><path d="M4.6 8.2A6.2 6.2 0 1 0 9.5 4.5"/></g><path d="M9.9 2.3L6.9 4.3L9.9 6.3Z" fill="#fff"/><text x="10.2" y="12.9" font-family="Liberation Sans, sans-serif" font-size="6.2" font-weight="bold" fill="#fff" text-anchor="middle">90</text></svg><div class="itx" style="top:94.1px;">Rotate 90 counterclockwise</div>
  <svg class="abs" style="left:407.3px;top:116.7px;" width="20.6" height="20.6" viewBox="0 0 20.6 20.6"><defs><linearGradient id="og" x1="0" y1="0" x2="0" y2="1"><stop offset="0" stop-color="#f0921a"/><stop offset="1" stop-color="#e27f08"/></linearGradient></defs><rect x=".4" y=".4" width="19.8" height="19.8" rx="2.6" fill="url(#og)" stroke="#d87a0c" stroke-width=".8"/><path d="M5.3 6.6V14.2L8.6 10.4Z" fill="none" stroke="#fff" stroke-width=".8"/><rect x="9.9" y="5.6" width="1" height="9.6" fill="#fff"/><path d="M15.9 6.3V14.5L12.3 10.4Z" fill="#fff"/></svg><div class="itx" style="top:121.3px;">Horizontal flip</div>
  <svg class="abs" style="left:407.3px;top:144px;" width="20.6" height="20.6" viewBox="0 0 20.6 20.6"><defs><linearGradient id="og" x1="0" y1="0" x2="0" y2="1"><stop offset="0" stop-color="#f0921a"/><stop offset="1" stop-color="#e27f08"/></linearGradient></defs><rect x=".4" y=".4" width="19.8" height="19.8" rx="2.6" fill="url(#og)" stroke="#d87a0c" stroke-width=".8"/><path d="M6.6 5.2H14.2L10.4 8.4Z" fill="none" stroke="#fff" stroke-width=".8"/><rect x="6.4" y="9.6" width="8" height="1" fill="#fff"/><path d="M6.3 15.8H14.5L10.4 12Z" fill="#fff"/></svg><div class="itx" style="top:148.6px;">Vertical flip</div>
  <!-- playback controls -->
  <svg class="abs" style="left:95px;top:391px;" width="305" height="20" viewBox="105 399 305 20">
    <g fill="#bdbdbd"><rect x="113" y="405.7" width="1.2" height="6.6"/><path d="M118.3 405.7V412.3L114.2 409Z"/>
    <rect x="189.1" y="405.7" width="1.2" height="6.6"/><path d="M185 405.7V412.3L189.1 409Z"/></g>
    <g fill="#2a2a2a"><path d="M131 404.3V413.7L136.6 409Z"/>
    <path d="M148.2 405.2V412.8L152.2 409Z"/><path d="M151.7 405.2V412.8L155.8 409Z"/>
    <rect x="166.4" y="405.7" width="6.6" height="6.6"/></g>
    <rect x="213.5" y="403" width="1" height="13" fill="#cfcfcf"/>
    <rect x="309" y="403" width="1" height="13" fill="#cfcfcf"/>
    <g fill="#222"><rect x="229.7" y="407" width="1.9" height="3.6"/><path d="M232.8 407.3L235.7 404.9V412.9L232.8 410.4Z"/></g>
    <circle cx="237.4" cy="410.1" r="2.5" fill="#e8432e"/><path d="M236.3 409L238.5 411.2M238.5 409L236.3 411.2" stroke="#fff" stroke-width=".7"/>
    <rect x="246" y="407.9" width="42" height="2.3" rx="1" fill="#5a9ef5"/>
    <circle cx="289.3" cy="409" r="4.3" fill="#9a9a9a"/>
    <text x="328.3" y="412.4" font-family="Liberation Sans, sans-serif" font-size="8.87" fill="#222">00:06:28/00:22:45</text>
  </svg>
  <!-- info -->
  <div class="abs" style="left:407px;top:281px;width:13px;height:1px;background:#dcdcdc;"></div>
  <div class="abs" style="left:441px;top:281px;width:130px;height:1px;background:#dcdcdc;"></div>
  <div class="info" style="left:422px;top:276.5px;">Info</div>
  <div class="info" style="left:420px;top:289.5px;">Original</div>
  <div class="info" style="left:425px;top:300.1px;">Resolution: 1280*720</div>
  <div class="info" style="left:425px;top:311.2px;">Aspect Ratio: 16:9</div>
  <div class="info" style="left:425px;top:322.6px;">Channels: 2</div>
  <div class="info" style="left:420px;top:335.3px;">Output</div>
  <div class="info" style="left:425px;top:346px;">Resolution: 1280*720</div>
  <div class="info" style="left:425px;top:357px;">Left/Right Eye Size: -</div>
  <div class="info" style="left:425px;top:367.6px;">Aspect Ratio: 16:9</div>
  <div class="info" style="left:425px;top:379px;">Channels: 2</div>
  <div class="abs" style="left:502px;top:393.5px;width:68px;height:11.5px;border:1px solid #d2d2d2;border-radius:2px;background:#fff;font-size:8.15px;line-height:12px;text-align:center;color:#222;white-space:nowrap;">Restore Defaults</div>
  <!-- buttons -->
  <div class="btn" style="left:406px;top:417.8px;width:50.5px;">Restore All</div>
  <div class="btn" style="left:467px;top:417.8px;width:46px;">Apply</div>
  <div class="btn" style="left:524px;top:417.8px;width:46px;">Close</div>
  <div id="frameb"></div>
</div>
</body></html>
